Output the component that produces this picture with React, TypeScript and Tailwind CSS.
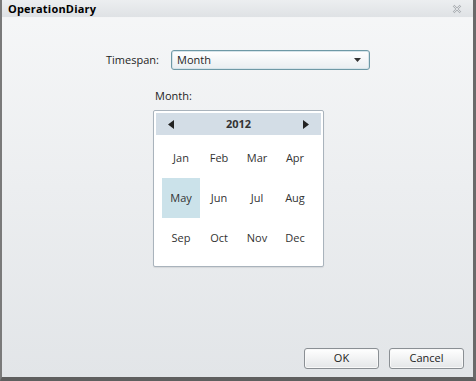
import React from "react";

const months = ["Jan","Feb","Mar","Apr","May","Jun","Jul","Aug","Sep","Oct","Nov","Dec"];

export default function App() {
  return (
    <div className="w-[476px] h-[381px] flex flex-col border-l-2 border-l-[#7a7a7a] border-r-[3px] border-r-[#6a6a6a] border-b-[4px] border-b-[#5f5f5f] bg-gradient-to-b from-[#f6f7f8] to-[#e2e5e8] overflow-hidden text-[#1e1e1e]" style={{ fontFamily: '"Open Sans", "DejaVu Sans", sans-serif' }}>
      <div className="h-[18px] flex items-center justify-between pl-[6px] pr-[11px] bg-gradient-to-b from-[#eceef0] to-[#dfe2e5] border-b border-b-[#f4f5f6]">
        <span className="text-[11px] font-bold text-black leading-none tracking-[0.2px]">OperationDiary</span>
        <svg width="10" height="10" viewBox="0 0 10 10" className="mt-[1px]">
          <path d="M1.5 1.5 L8.5 8.5 M8.5 1.5 L1.5 8.5" stroke="#a9adb1" strokeWidth="2.2" fill="none" />
          <path d="M1.5 1.5 L8.5 8.5 M8.5 1.5 L1.5 8.5" stroke="#eef0f2" strokeWidth="0.8" fill="none" />
        </svg>
      </div>
      <div className="flex-1 flex flex-col">
        <div className="flex items-center mt-[32px] ml-[104px]">
          <span className="text-[11px] w-[56px]">Timespan:</span>
          <div className="ml-[9px] w-[199px] h-[20px] rounded-[3px] border border-[#6e99a6] bg-gradient-to-b from-white to-[#e9eef1] flex items-center justify-between pl-[5px] pr-[8px] shadow-[inset_0_0_0_1px_#d6e4ea]">
            <span className="text-[11px]">Month</span>
            <svg width="7" height="4" viewBox="0 0 7 4"><path d="M0 0 L7 0 L3.5 4 Z" fill="#333" /></svg>
          </div>
        </div>
        <div className="ml-[153px] mt-[19px] text-[11px] leading-[14px]">Month:</div>
        <div className="ml-[151px] mt-[7px] w-[171px] h-[157px] border border-[#a9b3bc] bg-white rounded-[2px] shadow-[0_1px_1px_rgba(0,0,0,0.08)] p-[2px] flex flex-col">
          <div className="h-[22px] bg-[#d3dde6] flex items-center justify-between px-[12px]">
            <svg width="6" height="9" viewBox="0 0 6 9"><path d="M6 0 L6 9 L0 4.5 Z" fill="#222" /></svg>
            <span className="text-[11px] font-bold text-[#333]">2012</span>
            <svg width="6" height="9" viewBox="0 0 6 9"><path d="M0 0 L0 9 L6 4.5 Z" fill="#222" /></svg>
          </div>
          <div className="grid grid-cols-4 grid-rows-3 mt-[3px] ml-[6px] w-[152px] h-[120px]">
            {months.map((m) => (
              <div key={m} className={`flex items-center justify-center text-[11px] text-[#333] ${m === "May" ? "bg-[#cbe2ea]" : ""}`}>{m}</div>
            ))}
          </div>
        </div>
        <div className="flex-1" />
        <div className="flex justify-end gap-[10px] pr-[9px] pb-[8px]">
          <button className="w-[75px] h-[21px] rounded-[3px] border border-[#8a8f94] bg-gradient-to-b from-white to-[#e4e6e8] text-[11px] text-[#222] shadow-[inset_0_0_0_1px_#f8f8f8]">OK</button>
          <button className="w-[75px] h-[21px] rounded-[3px] border border-[#8a8f94] bg-gradient-to-b from-white to-[#e4e6e8] text-[11px] text-[#222] shadow-[inset_0_0_0_1px_#f8f8f8]">Cancel</button>
        </div>
      </div>
    </div>
  );
}
